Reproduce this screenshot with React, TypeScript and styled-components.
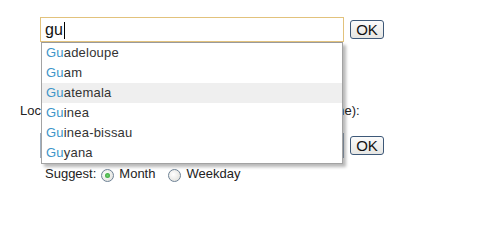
import styled, { createGlobalStyle } from 'styled-components'

const Global = createGlobalStyle`
  body {
    margin: 0;
    background: #fff;
    font-family: 'Liberation Sans', Arial, sans-serif;
    color: #222;
  }
`

const countries = ['Guadeloupe', 'Guam', 'Guatemala', 'Guinea', 'Guinea-bissau', 'Guyana']

const Page = styled.div`
  width: 480px;
  height: 201px;
  padding-top: 17px;
  box-sizing: border-box;
  overflow: hidden;
`

const Row = styled.div<{ $top?: number; $left?: number }>`
  display: flex;
  align-items: center;
  margin-top: ${({ $top }) => $top ?? 0}px;
  padding-left: ${({ $left }) => $left ?? 40}px;
`

const Field = styled.div`
  position: relative;
`

const TextInput = styled.div<{ $focused?: boolean }>`
  width: 304px;
  height: 25px;
  box-sizing: border-box;
  border: 1px solid ${({ $focused }) => ($focused ? '#e2c27c' : '#9fb0c2')};
  padding: 1px 4px 0;
  font-size: 16px;
  line-height: 22px;
  color: #111;
  display: flex;
  align-items: center;
`

const Caret = styled.span`
  display: inline-block;
  width: 1px;
  height: 17px;
  background: #000;
  margin-left: 1px;
`

const OkButton = styled.button`
  margin-left: 6px;
  width: 34px;
  height: 19px;
  padding: 0;
  box-sizing: border-box;
  border: 1px solid #3d5878;
  border-radius: 3px;
  background: linear-gradient(#fbfbfb, #e6e6e3);
  font-family: 'Liberation Sans', Arial, sans-serif;
  font-size: 15px;
  line-height: 17px;
  color: #111;
`

const Suggestions = styled.ul`
  position: absolute;
  top: 25px;
  left: 1px;
  width: 302px;
  margin: 0;
  padding: 0;
  list-style: none;
  box-sizing: border-box;
  background: #fff;
  border: 1px solid #a3a3a3;
  border-top-color: #9a9a9a;
  box-shadow: 3px 3px 3px rgba(0, 0, 0, 0.28);
  z-index: 2;
`

const Suggestion = styled.li<{ $active?: boolean }>`
  height: 20px;
  line-height: 20px;
  padding-left: 4px;
  font-size: 13px;
  letter-spacing: 0.2px;
  color: #333;
  background: ${({ $active }) => ($active ? '#efefef' : '#fff')};
`

const Match = styled.span`
  color: #3d95c9;
`

const Label = styled.div`
  padding-left: 20px;
  margin-top: 61px;
  font-size: 13px;
  line-height: 16px;
  white-space: nowrap;
`

const Options = styled.div`
  display: flex;
  align-items: center;
  padding-left: 45px;
  margin-top: 8px;
  font-size: 13px;
  line-height: 16px;
  color: #222;
`

const Radio = styled.span<{ $checked?: boolean }>`
  position: relative;
  width: 13px;
  height: 13px;
  box-sizing: border-box;
  border-radius: 50%;
  border: 1px solid #6e8296;
  background: radial-gradient(circle at 40% 40%, #ffffff, #dcdcd6);
  margin: 3px 5px 0 ${({ $checked }) => ($checked ? 5 : 13)}px;

  &::after {
    content: '';
    display: ${({ $checked }) => ($checked ? 'block' : 'none')};
    position: absolute;
    left: 3px;
    top: 3px;
    width: 5px;
    height: 5px;
    border-radius: 50%;
    background: radial-gradient(circle, #6fd26f, #2e9a2e);
  }
`

export default function App() {
  return (
    <Page>
      <Global />
      <Row>
        <Field>
          <TextInput $focused>
            gu
            <Caret />
          </TextInput>
          <Suggestions>
            {countries.map((c) => (
              <Suggestion key={c} $active={c === 'Guatemala'}>
                <Match>{c.slice(0, 2)}</Match>
                {c.slice(2)}
              </Suggestion>
            ))}
          </Suggestions>
        </Field>
        <OkButton>OK</OkButton>
      </Row>
      <Label>Location (type the first letters of a country or a town name):</Label>
      <Row $top={14}>
        <TextInput />
        <OkButton>OK</OkButton>
      </Row>
      <Options>
        Suggest:
        <Radio $checked />
        Month
        <Radio />
        Weekday
      </Options>
    </Page>
  )
}
